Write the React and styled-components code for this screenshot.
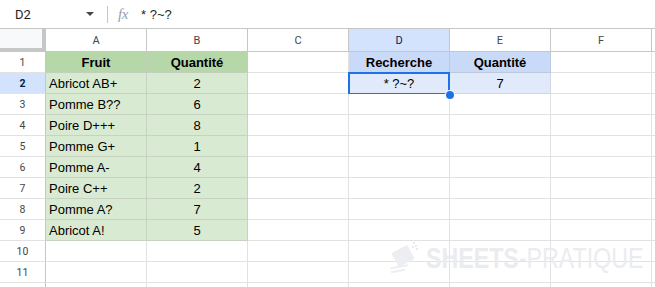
import React from 'react';
import styled, { createGlobalStyle, css } from 'styled-components';

const GlobalStyle = createGlobalStyle`
  html, body {
    margin: 0;
    padding: 0;
    background: #fff;
    overflow: hidden;
  }
  * {
    box-sizing: border-box;
  }
`;

const Page = styled.div`
  position: relative;
  width: 655px;
  height: 287px;
  overflow: hidden;
  background: #fff;
  font-family: 'Liberation Sans', Arial, sans-serif;
`;

const FormulaBar = styled.div`
  display: flex;
  align-items: center;
  height: 29px;
  border-bottom: 1px solid #c4c7c5;
  font-family: Roboto, 'Liberation Sans', sans-serif;
`;

const NameBox = styled.div`
  display: flex;
  align-items: center;
  width: 100px;
  padding: 0 6px 0 15px;
  font-size: 13px;
  color: #1f1f1f;
`;

const NameText = styled.span`
  flex: 1;
`;

const Divider = styled.div`
  width: 1px;
  height: 17px;
  margin-left: 7px;
  background: #c4c7c5;
`;

const Fx = styled.span`
  margin-left: 10px;
  width: 23px;
  font-family: 'Liberation Serif', serif;
  font-style: italic;
  font-size: 15px;
  color: #9aa0a6;
  letter-spacing: -0.5px;
`;

const FormulaText = styled.span`
  font-family: 'Liberation Sans', Arial, sans-serif;
  font-size: 13px;
  color: #1f1f1f;
`;

const Grid = styled.div`
  display: grid;
  grid-template-columns: 46px repeat(6, 101px) 40px;
  grid-template-rows: 23px repeat(11, 21px) 10px;
`;

const Corner = styled.div`
  background: #f8f9fa;
  border-right: 4px solid #c4c7c5;
  border-bottom: 4px solid #c4c7c5;
`;

const ColHead = styled.div`
  display: flex;
  align-items: center;
  justify-content: center;
  border-right: 1px solid #c4c7c5;
  border-bottom: 1px solid #c4c7c5;
  font-family: Roboto, 'Liberation Sans', sans-serif;
  font-size: 11px;
  color: #444746;
  background: ${(p) => (p.$active ? '#d3e3fd' : '#fff')};
  ${(p) =>
    p.$active &&
    css`
      color: #041e49;
    `}
`;

const RowHead = styled.div`
  display: flex;
  align-items: center;
  justify-content: center;
  border-right: 1px solid #c4c7c5;
  border-bottom: 1px solid #e2e2e3;
  font-family: Roboto, 'Liberation Sans', sans-serif;
  font-size: 10.5px;
  color: #444746;
  background: ${(p) => (p.$active ? '#d3e3fd' : '#fff')};
  ${(p) =>
    p.$active &&
    css`
      font-weight: bold;
      color: #041e49;
    `}
`;

const fills = {
  greenHead: { bg: '#b6d7a8', line: '#c2cfbc' },
  green: { bg: '#d9ead3', line: '#c7d2c3' },
  blueHead: { bg: '#c9daf8', line: '#bcc8dc' },
  blue: { bg: '#e1eafa', line: '#d0d7e3' },
};

const Cell = styled.div`
  position: relative;
  display: flex;
  align-items: center;
  justify-content: ${(p) => (p.$align === 'left' ? 'flex-start' : 'center')};
  padding: 1px 3px 0;
  border-right: 1px solid ${(p) => (p.$fill ? fills[p.$fill].line : '#e2e2e3')};
  border-bottom: 1px solid ${(p) => (p.$fill ? fills[p.$fill].line : '#e2e2e3')};
  background: ${(p) => (p.$fill ? fills[p.$fill].bg : '#fff')};
  font-size: 13px;
  font-weight: ${(p) => (p.$bold ? 'bold' : 'normal')};
  color: #000;
  white-space: nowrap;
`;

const Selection = styled.div`
  position: absolute;
  top: -1px;
  left: -1px;
  right: -1px;
  bottom: -2px;
  border: 2px solid #1a73e8;
  pointer-events: none;
`;

const Handle = styled.div`
  position: absolute;
  right: -5px;
  bottom: -6px;
  width: 8px;
  height: 8px;
  border-radius: 50%;
  background: #1a73e8;
  box-shadow: 0 0 0 1px #fff;
  z-index: 2;
`;

const Watermark = styled.div`
  position: absolute;
  left: 388px;
  top: 240px;
  display: flex;
  align-items: center;
  pointer-events: none;
`;

const MarkText = styled.div`
  margin-left: 4px;
  font-family: 'Liberation Sans', Arial, sans-serif;
  font-size: 29px;
  color: #eaecf0;
  transform: scaleX(0.8);
  transform-origin: left center;
  white-space: nowrap;
`;

const MarkBold = styled.span`
  font-weight: bold;
`;

// the last column (G) is only a sliver at the right edge, so no letter
const columns = ['A', 'B', 'C', 'D', 'E', 'F', ''];

const data = [
  ['Fruit', 'Quantité', '', 'Recherche', 'Quantité'],
  ['Abricot AB+', '2', '', '* ?~?', '7'],
  ['Pomme B??', '6'],
  ['Poire D+++', '8'],
  ['Pomme G+', '1'],
  ['Pomme A-', '4'],
  ['Poire C++', '2'],
  ['Pomme A?', '7'],
  ['Abricot A!', '5'],
  [],
  [],
  [],
];

function cellProps(r, c) {
  if (c <= 1 && r <= 8) {
    if (r === 0) return { $fill: 'greenHead', $bold: true };
    return { $fill: 'green', $align: c === 0 ? 'left' : 'center' };
  }
  if ((c === 3 || c === 4) && r <= 1) {
    if (r === 0) return { $fill: 'blueHead', $bold: true };
    return { $fill: 'blue' };
  }
  return {};
}

function Logo() {
  return (
    <svg width="34" height="36" viewBox="0 0 34 36">
      <g fill="#eceef1">
        <rect x="6" y="8" width="18" height="16" rx="2" transform="rotate(-28 15 16)" />
        <rect x="2" y="26" width="18" height="2" transform="rotate(-10 10 27)" />
        <rect x="3" y="30" width="14" height="2" transform="rotate(-10 10 31)" />
      </g>
      <g fill="#e2e5ea">
        <circle cx="26" cy="3" r="1" />
        <circle cx="28" cy="6" r="1" />
        <circle cx="25" cy="7" r="1" />
        <circle cx="29" cy="9" r="1" />
      </g>
    </svg>
  );
}

export default function App() {
  return (
    <Page>
      <GlobalStyle />
      <FormulaBar>
        <NameBox>
          <NameText>D2</NameText>
          <svg width="8" height="4" viewBox="0 0 8 4">
            <path d="M0 0 L8 0 L4 4 Z" fill="#444746" />
          </svg>
        </NameBox>
        <Divider />
        <Fx>fx</Fx>
        <FormulaText>* ?~?</FormulaText>
      </FormulaBar>
      <Grid>
        <Corner />
        {columns.map((col, i) => (
          <ColHead key={i} $active={col === 'D'}>
            {col}
          </ColHead>
        ))}
        {data.map((row, r) => (
          <React.Fragment key={r}>
            <RowHead $active={r === 1}>{r < 11 ? r + 1 : ''}</RowHead>
            {columns.map((col, c) => (
              <Cell key={c} {...cellProps(r, c)}>
                {row[c] || ''}
                {r === 1 && c === 3 && (
                  <>
                    <Selection />
                    <Handle />
                  </>
                )}
              </Cell>
            ))}
          </React.Fragment>
        ))}
      </Grid>
      <Watermark>
        <Logo />
        <MarkText>
          <MarkBold>SHEETS</MarkBold>-PRATIQUE
        </MarkText>
      </Watermark>
    </Page>
  );
}
